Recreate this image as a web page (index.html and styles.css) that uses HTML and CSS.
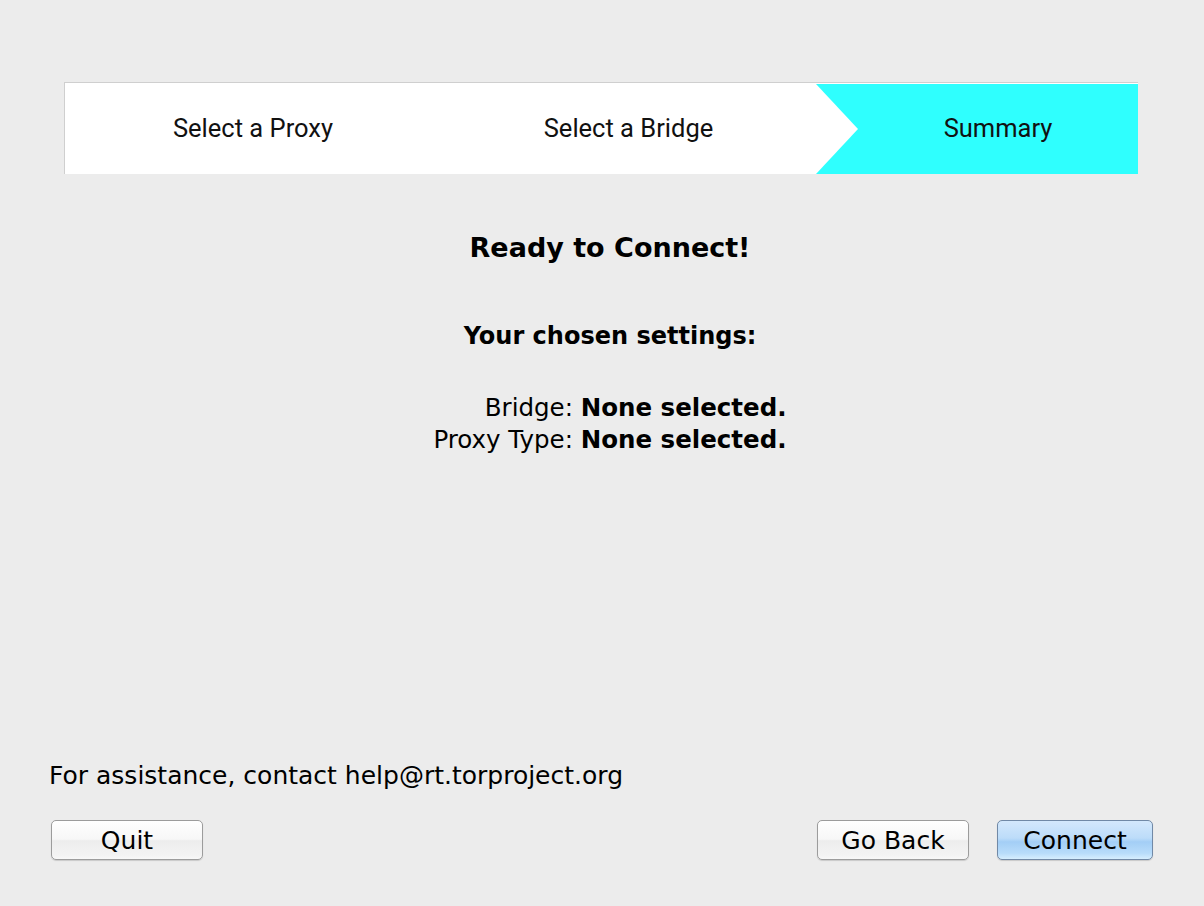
FILE: index.html
```html
<!DOCTYPE html>
<html lang="en">
<head>
<meta charset="utf-8">
<title>Tor Network Settings - Summary</title>
<link rel="stylesheet" href="styles.css">
</head>
<body>
<div class="app">
  <div class="steps">
    <div class="step">Select a Proxy</div>
    <div class="step">Select a Bridge</div>
    <div class="step step-active">Summary</div>
  </div>
  <div class="main">
    <h1 class="title">Ready to Connect!</h1>
    <h2 class="subtitle">Your chosen settings:</h2>
    <div class="settings">
      <div class="row">Bridge: <b>None selected.</b></div>
      <div class="row">Proxy Type: <b>None selected.</b></div>
    </div>
  </div>
  <div class="footer">
    <div class="help">For assistance, contact help@rt.torproject.org</div>
    <div class="buttons">
      <button class="btn">Quit</button>
      <div class="right">
        <button class="btn">Go Back</button>
        <button class="btn btn-default">Connect</button>
      </div>
    </div>
  </div>
</div>
</body>
</html>
```

FILE: styles.css
```css
html, body {
  margin: 0;
  padding: 0;
  background: #ececec;
}
.app {
  width: 1204px;
  height: 906px;
  box-sizing: border-box;
  padding-top: 82px;
  display: flex;
  flex-direction: column;
  font-family: "DejaVu Sans", "Liberation Sans", sans-serif;
  color: #000;
}
.steps {
  margin: 0 66px 0 64px;
  height: 92px;
  box-sizing: border-box;
  display: grid;
  grid-template-columns: 376px 375px 1fr;
  border-top: 1px solid #cfcfcf;
  border-left: 1px solid #cfcfcf;
  background: #fff;
  font-family: Roboto, "Liberation Sans", sans-serif;
  font-size: 25.5px;
}
.step {
  display: flex;
  align-items: center;
  justify-content: center;
  color: #111;
  padding-bottom: 2px;
}
.step-active {
  position: relative;
  background: #2ffffe;
  margin-top: 1px;
  padding-left: 42px;
  padding-bottom: 3px;
}
.step-active::before {
  content: "";
  position: absolute;
  left: 0;
  top: 0;
  border-top: 45px solid transparent;
  border-bottom: 45px solid transparent;
  border-left: 42px solid #fff;
}
.main {
  flex: 1;
  display: flex;
  flex-direction: column;
  align-items: center;
  padding-left: 16px;
}
.title {
  margin: 58px 0 0;
  font-size: 27px;
  line-height: 32px;
  font-weight: bold;
}
.subtitle {
  margin: 57px 0 0;
  font-size: 24px;
  line-height: 30px;
  font-weight: bold;
}
.settings {
  margin-top: 41px;
  text-align: right;
  font-size: 24.5px;
  line-height: 32px;
}
.footer {
  padding: 0 51px 46px 51px;
}
.help {
  margin-left: -2px;
  font-size: 25px;
  line-height: 28px;
  margin-bottom: 30px;
}
.buttons {
  display: flex;
  justify-content: space-between;
  align-items: center;
}
.right {
  display: flex;
  gap: 28px;
}
.btn {
  width: 152px;
  height: 40px;
  box-sizing: border-box;
  border: 1px solid #9c9c9c;
  border-radius: 5px;
  background: linear-gradient(#ffffff, #f7f7f7 48%, #ededed 52%, #f3f3f3 90%, #f8f8f8);
  box-shadow: 0 1px 1px rgba(0,0,0,0.15);
  font-family: "DejaVu Sans", "Liberation Sans", sans-serif;
  font-size: 25px;
  color: #000;
  padding: 0;
}
.btn-default {
  width: 156px;
  border-color: #7189a6;
  background: linear-gradient(#d4e8fc, #bcdcf9 45%, #a3cef6 55%, #b8dcfa 85%, #d6eefe);
}
```
